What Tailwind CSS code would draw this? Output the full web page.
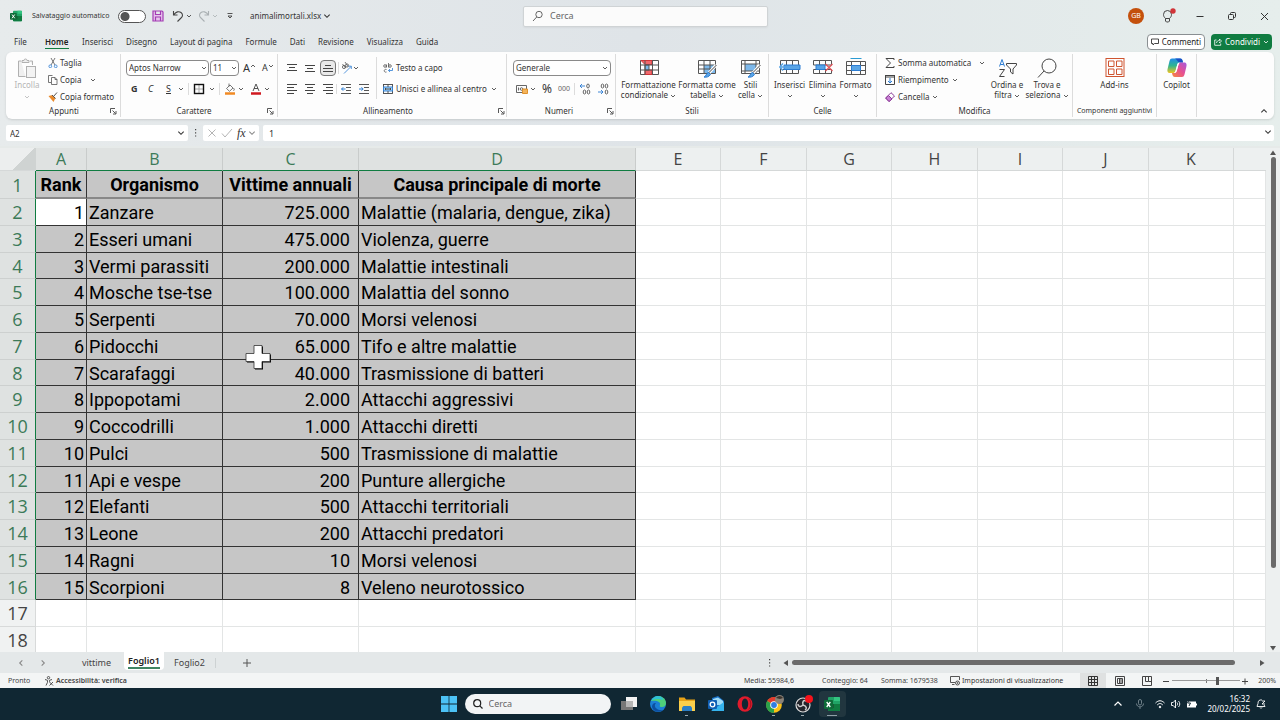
<!DOCTYPE html>
<html lang="it">
<head>
    <meta charset="UTF-8">
    <meta name="viewport" content="width=device-width, initial-scale=1.0">
    <title>animalimortali.xlsx - Excel</title>
    <script src="https://cdn.jsdelivr.net/npm/@tailwindcss/browser@4"></script>
</head>
<body class="flex flex-col h-screen overflow-hidden bg-[#e3e7e9] font-['Noto_Sans',sans-serif] text-[8px] leading-[10px] text-[#333] whitespace-nowrap">

    <svg class="hidden">
        <symbol id="chev" viewBox="0 0 6 6"><path d="M1 2l2 2 2-2" fill="none" stroke="currentColor" stroke-width=".8"/></symbol>
        <symbol id="launch" viewBox="0 0 7 7"><path d="M.5 5V.5H5M2.500 2.500l3 3M6 3v3H3" fill="none" stroke="#444" stroke-width=".9"/></symbol>
        <symbol id="excel" viewBox="0 0 16 16">
            <rect x="4" y="1" width="12" height="14" rx="1" fill="#21a366"/>
            <path d="M10 1h5a1 1 0 0 1 1 1v3h-6z" fill="#33c481"/>
            <path d="M4 8h12v6a1 1 0 0 1-1 1H5a1 1 0 0 1-1-1z" fill="#107c41"/>
            <path d="M4 8h6v4H4z" fill="#185c37"/>
            <rect x="0" y="4" width="9" height="9" rx="1" fill="#0e6b38"/>
            <path d="M2.700 6l3.600 5M6.300 6l-3.600 5" stroke="#fff" stroke-width="1.300"/>
        </symbol>
    </svg>

    <header class="shrink-0 bg-linear-to-r from-[#e7ebec] via-[#dfe4e8] to-[#e6eeec]">
        <!-- title bar -->
        <div class="flex items-center h-8">
            <div class="flex items-center w-[523px] pl-2.5">
                <svg class="size-3"><use href="#excel"/></svg>
                <label for="autosave" class="ml-2.5 w-[86px] text-[7px]">Salvataggio automatico</label>
                <input type="checkbox" id="autosave" class="appearance-none w-7 h-[13px] rounded-full border border-[#555] bg-white bg-[radial-gradient(circle_at_6px_50%,#555_4px,transparent_5px)]">
                <button aria-label="Salva" class="ml-1.5">
                    <svg class="size-3" viewBox="0 0 12 12" fill="none" stroke="#a33cb4" stroke-width="1.200"><path d="M1 1h9l1 1v9H1zM3.500 1v3.500h5V1M3.500 11V7h5v4" fill="#e6c3ec"/></svg>
                </button>
                <button aria-label="Annulla" class="ml-2">
                    <svg class="size-3" viewBox="0 0 12 12" fill="none" stroke="#444" stroke-width="1.100"><path d="M1.500 1v4h4M1.500 5C4 1.500 7 1 9 2.500s2 4 0 5.500L5.500 11.500"/></svg>
                </button>
                <svg class="size-1.5 ml-0.5"><use href="#chev"/></svg>
                <button aria-label="Ripeti" class="ml-1.5 text-[#aab0b3]">
                    <svg class="size-3" viewBox="0 0 12 12" fill="none" stroke="currentColor" stroke-width="1.100"><path d="M10.500 1v4h-4M10.500 5C8 1.500 5 1 3 2.500s-2 4 0 5.500l3.500 3.500"/></svg>
                </button>
                <svg class="size-1.5 ml-0.5 text-[#aab0b3]"><use href="#chev"/></svg>
                <button aria-label="Personalizza barra di accesso rapido" class="ml-2">
                    <svg class="size-2" viewBox="0 0 8 8" fill="none" stroke="#444" stroke-width=".9"><path d="M1.500 1.500h5M2 4l2 2 2-2z"/></svg>
                </button>
                <button class="flex items-center gap-0.5 ml-4">animalimortali.xlsx
                    <svg class="size-2"><use href="#chev"/></svg>
                </button>
            </div>
            <div class="flex items-center w-[245px] h-[21px] px-2 bg-[#fbfbfb] border border-[#cfd3d5] rounded-xs shadow-xs">
                <svg class="size-3" viewBox="0 0 12 12" fill="none" stroke="#555" stroke-width=".9"><circle cx="7" cy="4.500" r="3.200"/><path d="M4.700 7L1 11"/></svg>
                <input type="search" aria-label="Cerca" placeholder="Cerca" class="ml-1.5 flex-1 min-w-0 text-[9px] placeholder:text-[#666]">
            </div>
            <div class="flex flex-1 items-center justify-end pr-2.5">
                <span class="flex items-center justify-center size-4 rounded-full bg-[#c4500c] text-white text-[7px]">GB</span>
                <button aria-label="Suggerimenti" class="ml-4">
                    <svg class="size-4" viewBox="0 0 16 16" fill="none" stroke="#444"><path d="M5.500 10.500C4 9 3.500 8 3.500 6.500a4 4 0 0 1 8 0c0 1.500-.5 2.500-2 4zM5.500 10.500v2.500l1 1h2l1-1v-2.500"/><circle cx="13" cy="3" r="2.700" fill="#d13438" stroke="none"/></svg>
                </button>
                <button aria-label="Riduci a icona" class="ml-[18px]"><svg class="size-3" viewBox="0 0 12 12" stroke="#333"><path d="M2.500 6.500h7"/></svg></button>
                <button aria-label="Ripristina" class="ml-5"><svg class="size-3" viewBox="0 0 12 12" fill="none" stroke="#333"><rect x="2.500" y="4.500" width="5" height="5" rx="1"/><path d="M4.500 4V3.500a1 1 0 0 1 1-1h3a1 1 0 0 1 1 1v3a1 1 0 0 1-1 1H8"/></svg></button>
                <button aria-label="Chiudi" class="ml-5"><svg class="size-3" viewBox="0 0 12 12" stroke="#333"><path d="M3 3l7 7M10 3l-7 7"/></svg></button>
            </div>
        </div>

        <!-- ribbon tabs -->
        <nav class="flex items-center h-5 pl-3.5 pr-2">
            <div class="flex items-center gap-[13px]">
                <a href="#" class="w-[18px]">File</a>
                <a href="#" class="relative w-6 font-semibold text-[#222] after:absolute after:inset-x-0 after:-bottom-0.5 after:h-px after:bg-[#107c41]">Home</a>
                <a href="#">Inserisci</a>
                <a href="#">Disegno</a>
                <a href="#">Layout di pagina</a>
                <a href="#">Formule</a>
                <a href="#">Dati</a>
                <a href="#">Revisione</a>
                <a href="#">Visualizza</a>
                <a href="#">Guida</a>
            </div>
            <div class="flex gap-1.5 ml-auto">
                <button class="flex items-center gap-[3px] h-4 px-[3px] bg-white border border-[#8a8f92] rounded-sm text-[#222]">
                    <svg class="size-2" viewBox="0 0 8 8" fill="none" stroke="#333" stroke-width=".9"><path d="M.5 1h7v4.500h-4L2 7V5.500H.5z"/></svg>
                    Commenti
                </button>
                <button class="flex items-center gap-[3px] h-4 px-[3px] bg-[#107c41] rounded-sm text-white">
                    <svg class="size-2" viewBox="0 0 8 8" fill="none" stroke="#fff" stroke-width=".8"><path d="M2.500 2H.7v5.300h6V5.500M2.500 5c.3-2 1.500-2.500 3-2.500V1l2 2-2 2V3.800"/></svg>
                    Condividi
                    <svg class="size-1.5"><use href="#chev"/></svg>
                </button>
            </div>
        </nav>

        <!-- ribbon -->
        <div class="flex h-[67px] mx-1.5 bg-[#fdfdfd] rounded-md shadow-sm py-0.5">
            <section class="flex flex-col w-[115px] shrink-0 border-r border-[#dcdcdc]">
                <div class="flex h-[52px]">
                    <button class="flex flex-col items-center w-[42px] pt-1 text-[#b5b5b5]">
                        <svg class="size-[22px]" viewBox="0 0 22 22" fill="none" stroke="#b0b0b0"><path d="M5 3H2.500v15.500h7M14 3h2.500v4M6 4.500h7V2.500h-2a1.500 1.500 0 0 0-3 0H6z" fill="#efefef"/><rect x="10.500" y="8.500" width="9" height="11" fill="#f3f3f3"/></svg>
                        <span>Incolla</span>
                        <svg class="size-1.5 mt-1"><use href="#chev"/></svg>
                    </button>
                    <div class="flex flex-col">
                        <button class="flex items-center h-[17px] gap-0.5">
                            <svg class="size-2.5" viewBox="0 0 10 10" fill="none" stroke="#555" stroke-width=".8"><path d="M3 0l4 7M7 0L3 7"/><circle cx="2.300" cy="8.300" r="1.400" stroke="#2b7cd3"/><circle cx="7.700" cy="8.300" r="1.400" stroke="#2b7cd3"/></svg>
                            Taglia
                        </button>
                        <button class="flex items-center h-[17px] gap-0.5">
                            <svg class="size-2.5" viewBox="0 0 10 10" fill="none" stroke="#555" stroke-width=".8"><path d="M3 7.500H.5v-7h4"/><path d="M3.500 2.500h3.500l2 2v5h-5.500zM7 2.500v2h2"/></svg>
                            <span class="w-7 text-left">Copia</span>
                            <svg class="size-1.5"><use href="#chev"/></svg>
                        </button>
                        <button class="flex items-center h-[17px] gap-0.5">
                            <svg class="size-2.5" viewBox="0 0 10 10"><path d="M.5 4l4-1 3 3-2 4z" fill="#e8892b"/><path d="M4 3l3.500 3.500M5.500 4.500l3.500-4" stroke="#555" fill="none"/></svg>
                            Copia formato
                        </button>
                    </div>
                </div>
                <div class="flex items-center h-3"><span class="flex-1 text-center pl-3">Appunti</span><button aria-label="Appunti: opzioni" class="mr-[3px]"><svg class="size-[7px]"><use href="#launch"/></svg></button></div>
            </section>

            <section class="flex flex-col w-[157px] shrink-0 border-r border-[#dcdcdc]">
                <div class="flex flex-col h-[52px] pl-[5px] pt-[3px]">
                    <div class="flex items-center h-[21px]">
                        <div class="relative">
                            <select aria-label="Tipo di carattere" class="appearance-none w-[83px] h-4 pl-0.5 border border-[#8a8a8a] rounded-sm bg-white"><option>Aptos Narrow</option></select>
                            <svg class="absolute right-0.5 top-[5px] size-1.5"><use href="#chev"/></svg>
                        </div>
                        <div class="relative ml-px">
                            <select aria-label="Dimensione carattere" class="appearance-none w-[29px] h-4 pl-0.5 border border-[#8a8a8a] rounded-sm bg-white"><option>11</option></select>
                            <svg class="absolute right-0.5 top-[5px] size-1.5"><use href="#chev"/></svg>
                        </div>
                        <button aria-label="Aumenta dimensione carattere" class="flex ml-1 text-[11px]">A<svg class="size-1.5 rotate-180"><use href="#chev"/></svg></button>
                        <button aria-label="Riduci dimensione carattere" class="flex ml-1.5 text-[9px]">A<svg class="size-1.5"><use href="#chev"/></svg></button>
                    </div>
                    <div class="flex items-center h-[21px] pl-[5px] text-[9px]">
                        <button class="font-bold w-[17px] text-left">G</button>
                        <button class="italic w-[18px] text-left">C</button>
                        <button class="underline w-[12px] text-left">S</button>
                        <svg class="size-1.5"><use href="#chev"/></svg>
                        <button aria-label="Bordi" class="ml-1 pl-1 border-l border-[#dcdcdc]"><svg class="size-3" viewBox="0 0 12 12" fill="none"><path d="M6 2v8M2 6h8" stroke="#aaa"/><rect x="1.500" y="1.500" width="9" height="9" stroke="#111" stroke-width="1.400"/></svg></button>
                        <svg class="size-1.5 ml-1"><use href="#chev"/></svg>
                        <button aria-label="Colore riempimento" class="ml-1 pl-1 border-l border-[#dcdcdc]"><svg class="size-3" viewBox="0 0 12 12" fill="none" stroke="#555" stroke-width=".8"><path d="M2.500 5.500L6 2l3 3-3.500 3.300zM5 .5v3M9.500 5c1 1.500 1 2.500 0 2.500"/><path d="M1 10.500h10" stroke="#f08a24" stroke-width="2.500"/></svg></button>
                        <svg class="size-1.5 ml-0.5"><use href="#chev"/></svg>
                        <button aria-label="Colore carattere" class="ml-1.5"><svg class="size-3" viewBox="0 0 12 12" fill="none" stroke="#444" stroke-width=".9"><path d="M3 8l3-7 3 7M4 5.500h4"/><path d="M1 10.500h10" stroke="#d0191f" stroke-width="2.500"/></svg></button>
                        <svg class="size-1.5 ml-0.5"><use href="#chev"/></svg>
                    </div>
                </div>
                <div class="flex items-center h-3"><span class="flex-1 text-center">Carattere</span><button aria-label="Carattere: opzioni" class="mr-[3px]"><svg class="size-[7px]"><use href="#launch"/></svg></button></div>
            </section>

            <section class="flex flex-col w-[229px] shrink-0 border-r border-[#dcdcdc]">
                <div class="flex h-[52px] pl-1.5 pt-[3px]">
                    <div class="w-[92px]">
                        <div class="flex items-center h-[21px]">
                            <button aria-label="Allinea in alto" class="p-[3px]"><svg class="size-2.5" viewBox="0 0 10 10" stroke="#444"><path d="M0 1.500h10M2 4.500h6M0 7.500h10"/></svg></button>
                            <button aria-label="Allinea al centro verticalmente" class="p-[3px] ml-0.5"><svg class="size-2.5" viewBox="0 0 10 10" stroke="#444"><path d="M0 2.500h10M2 5.500h6M0 8.500h10"/></svg></button>
                            <button aria-label="Allinea in basso" class="p-0.5 ml-0.5 border border-[#777] rounded-sm bg-[#e8e8e8]"><svg class="size-2.5" viewBox="0 0 10 10" stroke="#444"><path d="M2 2.500h6M0 5.500h10M0 8.500h10"/></svg></button>
                            <button aria-label="Orientamento" class="ml-0.5 pl-0.5 border-l border-[#dcdcdc]"><svg class="size-3" viewBox="0 0 12 12" fill="none" stroke="#555" stroke-width=".8"><circle cx="3" cy="5" r="1.600"/><circle cx="6" cy="3.500" r="1.600"/><path d="M1.500 2l3 4M4 0l3 4.500"/><path d="M3 11.500l7-7M7.500 4.200h2.800V7" stroke="#2b7cd3"/></svg></button>
                            <svg class="size-1.5"><use href="#chev"/></svg>
                        </div>
                        <div class="flex items-center h-[21px]">
                            <button aria-label="Allinea a sinistra" class="p-[3px]"><svg class="size-2.5" viewBox="0 0 10 10" stroke="#444"><path d="M0 .5h10M0 3.500h7M0 6.500h10M0 9.500h7"/></svg></button>
                            <button aria-label="Allinea al centro" class="p-[3px] ml-0.5"><svg class="size-2.5" viewBox="0 0 10 10" stroke="#444"><path d="M0 .5h10M2 3.500h6M0 6.500h10M2 9.500h6"/></svg></button>
                            <button aria-label="Allinea a destra" class="p-[3px] ml-0.5"><svg class="size-2.5" viewBox="0 0 10 10" stroke="#444"><path d="M0 .5h10M3 3.500h7M0 6.500h10M3 9.500h7"/></svg></button>
                            <button aria-label="Riduci rientro" class="pl-1 border-l border-[#dcdcdc]"><svg class="size-2.5" viewBox="0 0 10 10" fill="none" stroke="#555"><path d="M0 .5h10M5 3.500h5M5 6.500h5M0 9.500h10"/><path d="M4.500 5H.7M2.200 3.300L.5 5l1.700 1.700" stroke="#2b7cd3"/></svg></button>
                            <button aria-label="Aumenta rientro" class="ml-2"><svg class="size-2.5" viewBox="0 0 10 10" fill="none" stroke="#555"><path d="M0 .5h10M5 3.500h5M5 6.500h5M0 9.500h10"/><path d="M0 5h4M2.500 3.300L4.200 5 2.500 6.700" stroke="#2b7cd3"/></svg></button>
                        </div>
                    </div>
                    <div class="pl-1.5 border-l border-[#dcdcdc] h-[42px]">
                        <button class="flex items-center h-[21px] gap-[3px]">
                            <svg class="size-2.5" viewBox="0 0 10 10" fill="none" stroke="#555" stroke-width=".8"><circle cx="2" cy="3" r="1.300"/><path d="M3.500 1.500v3M5.500 0v4.500"/><circle cx="7" cy="3" r="1.300"/><path d="M3.500 6.500c-3-1-3 3.500 0 2.500"/><path d="M9.500 5v2.500H5.500M7 6L5.500 7.500 7 9" stroke="#2b7cd3"/></svg>
                            Testo a capo
                        </button>
                        <button class="flex items-center h-[21px] gap-[3px]">
                            <svg class="size-2.5" viewBox="0 0 10 10" fill="none" stroke="#444" stroke-width=".9"><rect x=".5" y=".5" width="9" height="9"/><rect x=".5" y="3" width="9" height="4" fill="#a9d3f5" stroke="#2b7cd3"/><path d="M5 .5V3M5 7v2.500M2 5h6M3 4L2 5l1 1M7 4l1 1-1 1"/></svg>
                            <span class="w-[92px] text-left">Unisci e allinea al centro</span>
                            <svg class="size-1.5"><use href="#chev"/></svg>
                        </button>
                    </div>
                </div>
                <div class="flex items-center h-3"><span class="flex-1 text-center">Allineamento</span><button aria-label="Allineamento: opzioni" class="mr-px"><svg class="size-[7px]"><use href="#launch"/></svg></button></div>
            </section>

            <section class="flex flex-col w-[109px] shrink-0 border-r border-[#dcdcdc]">
                <div class="h-[52px] pl-1.5 pt-[3px]">
                    <div class="relative flex items-center h-[21px]">
                        <select aria-label="Formato numero" class="appearance-none w-[98px] h-4 pl-0.5 border border-[#8a8a8a] rounded-sm bg-white"><option>Generale</option></select>
                        <svg class="absolute right-[7px] top-2 size-1.5"><use href="#chev"/></svg>
                    </div>
                    <div class="flex items-center h-[21px] pl-[3px]">
                        <button aria-label="Formato valuta"><svg class="size-3" viewBox="0 0 12 12" fill="none" stroke="#555" stroke-width=".9"><path d="M.5 2.500h10v7H.5zM2.500 4.500v3"/><circle cx="5.500" cy="6" r="1.300"/><path d="M6.500 6h5v4.500h-5z" fill="#f3b45c" stroke="#dd8a1f"/></svg></button>
                        <svg class="size-1.5 ml-0.5"><use href="#chev"/></svg>
                        <button class="ml-1.5 text-[12px]">%</button>
                        <button aria-label="Stile separatore" class="ml-1.5 text-[#666] text-[7px]">000</button>
                        <button aria-label="Aumenta decimali" class="ml-1 pl-1 border-l border-[#dcdcdc]"><svg class="size-3" viewBox="0 0 12 12" fill="none" stroke="#555" stroke-width=".9"><ellipse cx="9" cy="3" rx="1.300" ry="2"/><ellipse cx="5.500" cy="9" rx="1.300" ry="2"/><ellipse cx="9.500" cy="9" rx="1.300" ry="2"/><path d="M6 3H1M3 1L1 3l2 2" stroke="#2b7cd3"/></svg></button>
                        <button aria-label="Diminuisci decimali" class="ml-1.5"><svg class="size-3" viewBox="0 0 12 12" fill="none" stroke="#555" stroke-width=".9"><ellipse cx="5.500" cy="3" rx="1.300" ry="2"/><ellipse cx="9.500" cy="3" rx="1.300" ry="2"/><ellipse cx="9.500" cy="9" rx="1.300" ry="2"/><path d="M1 9h5M4 7l2 2-2 2" stroke="#2b7cd3"/></svg></button>
                    </div>
                </div>
                <div class="flex items-center h-3"><span class="flex-1 text-center pl-1">Numeri</span><button aria-label="Numeri: opzioni" class="mr-px"><svg class="size-[7px]"><use href="#launch"/></svg></button></div>
            </section>

            <section class="flex flex-col w-[153px] shrink-0 border-r border-[#dcdcdc] text-center">
                <div class="flex h-[52px] justify-center gap-1 pt-1">
                    <button class="flex flex-col items-center gap-0.5 w-[54px]">
                        <svg class="size-5" viewBox="0 0 20 20" fill="none" stroke="#555"><path d="M1.500 2.500h18v14h-18z" fill="#fff"/><path d="M2 2.500h11v4H6zM6 12h7v4.500H6z" fill="#f0686c" stroke="#d13438"/><path d="M6 7h4v5H6z" fill="#7db8ea"/><path d="M1.500 7h18M1.500 12h18M6 2.500v14M13.500 2.500v14"/></svg>
                        <span>Formattazione<br>condizionale <svg class="inline size-1.5"><use href="#chev"/></svg></span>
                    </button>
                    <button class="flex flex-col items-center gap-0.5 w-[55px]">
                        <svg class="size-5" viewBox="0 0 20 20" fill="none" stroke="#555"><path d="M1.500 2.500h17v13h-17z" fill="#fff"/><path d="M7 7h11v8H7z" fill="#7db8ea" stroke="none"/><path d="M1.500 7h17M1.500 11h17M7 2.500v13M13 2.500v13"/><path d="M19 7l-7 8" stroke="#fff" stroke-width="3"/><path d="M19.500 7l-8 8" stroke="#444"/><path d="M7 19c2 0 2-4 4.500-4.500l2 2C12 19 9 19.500 7 19z" fill="#5aa5e6" stroke="#2b7cd3"/></svg>
                        <span>Formatta come<br>tabella <svg class="inline size-1.5"><use href="#chev"/></svg></span>
                    </button>
                    <button class="flex flex-col items-center gap-0.5 w-[24px]">
                        <svg class="size-5" viewBox="0 0 20 20" fill="none" stroke="#555"><path d="M.5 2.500h18v13H.5z" fill="#fff"/><path d="M4 6h11v7H4z" fill="#7db8ea" stroke="none"/><path d="M.5 6h18M4 2.500v13M15 2.500v13M.5 13h18"/><path d="M19 7l-7 8" stroke="#fff" stroke-width="3"/><path d="M19.500 7l-8 8" stroke="#444"/><path d="M7 19c2 0 2-4 4.500-4.500l2 2C12 19 9 19.500 7 19z" fill="#5aa5e6" stroke="#2b7cd3"/></svg>
                        <span>Stili<br>cella <svg class="inline size-1.5"><use href="#chev"/></svg></span>
                    </button>
                </div>
                <span class="leading-3">Stili</span>
            </section>

            <section class="flex flex-col w-[108px] shrink-0 border-r border-[#dcdcdc] text-center">
                <div class="flex h-[52px] justify-center gap-0.5 pt-1">
                    <button class="flex flex-col items-center gap-0.5 w-[31px]">
                        <svg class="w-[22px] h-5" viewBox="0 0 22 20" fill="none" stroke="#555"><path d="M1.500 2.500h18v13h-18zM7.500 2.500v13M13.500 2.500v13M1.500 11.500h18"/><path d="M5 7h16v4.500H5z" fill="#5aa5e6" stroke="#2b7cd3"/><path d="M9 9H.8M4 5.500L.8 9 4 12.500" stroke="#5aa5e6" stroke-width="1.500"/></svg>
                        <span>Inserisci<br><svg class="inline size-1.5"><use href="#chev"/></svg></span>
                    </button>
                    <button class="flex flex-col items-center gap-0.5 w-[31px]">
                        <svg class="w-[22px] h-5" viewBox="0 0 22 20" fill="none" stroke="#555"><path d="M1.500 2.500h18v4.500M1.500 2.500V7h18M1.500 11.500v4h18v-4h-18M7.500 2.500V7M13.500 2.500V7M7.500 11.500v4M13.500 11.500v4"/><path d="M4 7h9v4.500H4z" fill="#5aa5e6" stroke="#2b7cd3"/><path d="M13.500 6l7 7M20.500 6l-7 7" stroke="#e0555a" stroke-width="1.300"/></svg>
                        <span>Elimina<br><svg class="inline size-1.5"><use href="#chev"/></svg></span>
                    </button>
                    <button class="flex flex-col items-center gap-0.5 w-[31px]">
                        <svg class="w-[22px] h-5" viewBox="0 0 22 20" fill="none" stroke="#555"><path d="M1.500 3.500h19v13h-19zM6.500 3.500v13M15.500 3.500v13M1.500 7.500h19M1.500 12.500h19"/><path d="M6.500 7.500h9v5h-9z" fill="#5aa5e6" stroke="#2b7cd3"/><path d="M5.500.5h11" stroke="#2b9bd3"/></svg>
                        <span>Formato<br><svg class="inline size-1.5"><use href="#chev"/></svg></span>
                    </button>
                </div>
                <span class="leading-3">Celle</span>
            </section>

            <section class="flex flex-col w-[196px] shrink-0 border-r border-[#dcdcdc] text-center">
                <div class="flex h-[52px] pl-2">
                    <div class="w-[102px]">
                        <button class="flex items-center h-[17px] gap-[3px]">
                            <svg class="size-2.5" viewBox="0 0 10 10" fill="none" stroke="#444"><path d="M9 2V.5H1L5.500 5 1 9.500h8V8"/></svg>
                            <span class="w-[78px] text-left">Somma automatica</span>
                            <svg class="size-1.5"><use href="#chev"/></svg>
                        </button>
                        <button class="flex items-center h-[17px] gap-[3px]">
                            <svg class="size-2.5" viewBox="0 0 10 10" fill="none" stroke="#444"><path d="M0 .5h10M.5.5v9h9v-9M.5 2h9"/><path d="M5 3v5M3 6l2 2 2-2" stroke="#2b7cd3"/></svg>
                            Riempimento
                            <svg class="size-1.5"><use href="#chev"/></svg>
                        </button>
                        <button class="flex items-center h-[17px] gap-[3px]">
                            <svg class="size-2.5" viewBox="0 0 10 10" fill="none" stroke="#8a3b96"><path d="M6 .7L9.500 4 4 9.500.7 6z"/><path d="M3.500 3.500L7 7 4 9.500.7 6z" fill="#c87fd4"/></svg>
                            Cancella
                            <svg class="size-1.5"><use href="#chev"/></svg>
                        </button>
                    </div>
                    <button class="flex flex-col items-center gap-0.5 w-10 pt-1">
                        <svg class="size-5" viewBox="0 0 20 20" fill="none"><path d="M2.500 8.500L5 1.500l2.500 7M3.300 6.500h3.400" stroke="#2b7cd3"/><path d="M2.500 11.500h5l-5 7h5" stroke="#444"/><path d="M9.500 5.500h10v1.500l-3.500 4v5l-2.500-2v-3l-4-4z" stroke="#444"/></svg>
                        <span>Ordina e<br>filtra <svg class="inline size-1.5"><use href="#chev"/></svg></span>
                    </button>
                    <button class="flex flex-col items-center gap-0.5 w-10 pt-1">
                        <svg class="size-5" viewBox="0 0 20 20" fill="none" stroke="#444"><circle cx="12" cy="8" r="7"/><path d="M7 13l-6 6.500"/></svg>
                        <span>Trova e<br>seleziona <svg class="inline size-1.5"><use href="#chev"/></svg></span>
                    </button>
                </div>
                <span class="leading-3">Modifica</span>
            </section>

            <section class="flex flex-col items-center w-[84px] shrink-0 border-r border-[#dcdcdc]">
                <button class="flex flex-col items-center gap-0.5 h-[52px] pt-1">
                    <svg class="size-5" viewBox="0 0 20 20" fill="none" stroke="#cf5430"><rect x="1" y=".5" width="18" height="18"/><path d="M3.500 3h5.500v5.500H3.500zM11.500 3H17v5.500h-5.500zM3.500 11H9v5.500H3.500zM11.500 11H17v5.500h-5.500z"/></svg>
                    Add-ins
                </button>
                <span class="leading-3 text-[7px]">Componenti aggiuntivi</span>
            </section>

            <section class="w-10 shrink-0 border-r border-[#dcdcdc] text-center">
                <button class="flex flex-col items-center gap-0.5 w-full h-[52px] pt-1">
                    <svg class="size-5" viewBox="0 0 20 20">
                        <defs>
                            <linearGradient id="cp1" x1="0" y1="0" x2="0" y2="1"><stop offset="0" stop-color="#1f8ce8"/><stop offset=".5" stop-color="#2fb58f"/><stop offset="1" stop-color="#f0c420"/></linearGradient>
                            <linearGradient id="cp2" x1="1" y1="0" x2="0" y2="1"><stop offset="0" stop-color="#a45be0"/><stop offset=".5" stop-color="#e8508f"/><stop offset="1" stop-color="#f58a3c"/></linearGradient>
                        </defs>
                        <path d="M5 .5h8c2 0 2.500 1.500 3 4h-3c-2 0-2.500 1-3 3L8.500 13c-.5 1.500-1.500 2-3 2H3C.5 15 0 13 .7 10.500L2.500 3C3 1.300 3.700.5 5 .5z" fill="url(#cp1)"/>
                        <path d="M8 .5h5c2 0 2.500 1.500 3 4h-3.500C11 4.500 10.500 2 8 .5z" fill="#1b4fc4"/>
                        <path d="M15 19H8c-2 0-2.500-1.500-3-4h2c2 0 2.500-1 3-3l1.500-5.500c.5-1.500 1.500-2 3-2H17c2.500 0 3 2 2.300 4.500L17.500 16.500c-.5 1.700-1.200 2.500-2.500 2.500z" fill="url(#cp2)"/>
                        <path d="M10 7.500L8.500 13c-.3 1-.8 1.600-1.500 2 2 0 2.500-1 3-3l1.500-5.500c.3-1 .8-1.700 1.500-2-2 0-2.500 1-3 3z" fill="#fff"/>
                    </svg>
                    Copilot
                </button>
            </section>
            <div class="flex flex-1 items-end justify-end pr-1.5 pb-0.5">
                <button aria-label="Comprimi barra multifunzione"><svg class="size-2 rotate-180"><use href="#chev"/></svg></button>
            </div>
        </div>

        <!-- formula bar -->
        <div class="flex items-center h-[27px] pb-[5px] pt-1.5 pl-1.5 pr-1.5">
            <div class="relative w-[182px]">
                <input type="text" aria-label="Casella nome" value="A2" class="w-full h-4 px-1 bg-white rounded-xs">
                <svg class="absolute right-[3px] top-1 size-2"><use href="#chev"/></svg>
            </div>
            <svg class="w-[15px] h-2" viewBox="0 0 15 8" fill="#444"><path d="M7 0h1.200v1.200H7zM7 3.200h1.200v1.200H7zM7 6.400h1.200v1.200H7z"/></svg>
            <div class="flex items-center gap-1 h-4 w-14 px-1 bg-white rounded-xs">
                <button aria-label="Annulla immissione"><svg class="size-2.5" viewBox="0 0 10 10" stroke="#b5b5b5"><path d="M1.500 1.500l7 7M8.500 1.500l-7 7"/></svg></button>
                <button aria-label="Invio"><svg class="size-3" viewBox="0 0 12 12" fill="none" stroke="#b5b5b5"><path d="M1 6.500l3 3.500 7-8"/></svg></button>
                <button class="font-['Liberation_Serif',serif] italic text-[12px]">fx</button>
                <svg class="size-2 -ml-0.5 shrink-0 text-[#888]"><use href="#chev"/></svg>
            </div>
            <div class="relative flex-1 ml-1">
                <input type="text" aria-label="Barra della formula" value="1" class="w-full h-4 px-1.5 bg-white rounded-xs text-[9px]">
                <svg class="absolute right-0.5 top-[3px] size-2"><use href="#chev"/></svg>
            </div>
        </div>
    </header>

    <!-- sheet -->
    <main class="relative flex flex-1 min-h-0 bg-white border-t-2 border-[#e6eae9]">
        <div class="flex-1 min-w-0 overflow-hidden">
            <table class="w-full table-fixed border-separate border-spacing-0 font-[Roboto,sans-serif] text-[18px] leading-6 text-black">
                <colgroup>
                    <col class="w-9"><col class="w-[51px]"><col class="w-[136px]"><col class="w-[136px]"><col class="w-[277px]">
                    <col class="w-[85px]"><col class="w-[86px]"><col class="w-[85px]"><col class="w-[86px]"><col class="w-[85px]"><col class="w-[86px]"><col class="w-[85px]"><col>
                </colgroup>
                <thead id="cols"></thead>
                <tbody id="rows"></tbody>
            </table>
        </div>
        <!-- cell pointer -->
        <svg class="absolute left-[244px] top-[195px] size-7" viewBox="0 0 28 28"><path d="M11 3.500h8v8h8v8h-8v7h-8v-7H3v-8h8z" fill="#000"/><path d="M10 2.500h8v8h8v8h-8v7h-8v-7H2v-8h8z" fill="#fff" stroke="#333" stroke-width=".8"/></svg>
        <div class="flex flex-col items-center w-3.5 bg-[#edf0f0]">
            <svg class="size-2 mt-px" viewBox="0 0 8 8" fill="#555"><path d="M4 1.500L7 6H1z"/></svg>
            <div class="w-[5px] h-[411px] rounded-full bg-[#6b6b6b]"></div>
            <svg class="size-2 mt-auto" viewBox="0 0 8 8" fill="#555"><path d="M4 6.500L7 2H1z"/></svg>
        </div>
    </main>

    <!-- sheet tabs -->
    <div class="flex items-center h-[21px] shrink-0 bg-[#e4e8e9] text-[#444]">
        <button aria-label="Foglio precedente" class="ml-[17px]"><svg class="size-2 rotate-90 text-[#888]"><use href="#chev"/></svg></button>
        <button aria-label="Foglio successivo" class="ml-3.5"><svg class="size-2 -rotate-90 text-[#888]"><use href="#chev"/></svg></button>
        <button class="w-[75px] pl-5 ml-0.5 text-[9px]">vittime</button>
        <button class="self-start w-10 h-[18px] bg-white rounded-b-sm font-semibold text-[9px] text-[#222]"><span class="border-b-2 border-[#3f8562]">Foglio1</span></button>
        <button class="w-[52px] border-r border-[#cdd2d3] text-[9px]">Foglio2</button>
        <button aria-label="Nuovo foglio" class="ml-[26px]"><svg class="size-2.5" viewBox="0 0 10 10" stroke="#555"><path d="M5 1v8M1 5h8"/></svg></button>
        <div class="flex items-center ml-auto w-[514px]">
            <svg class="w-2 h-2" viewBox="0 0 8 8" fill="#444"><path d="M3 0h1.200v1.200H3zM3 3.200h1.200v1.200H3zM3 6.400h1.200v1.200H3z"/></svg>
            <svg class="size-2 ml-2" viewBox="0 0 8 8" fill="#555"><path d="M1.500 4L6 1v6z"/></svg>
            <div class="w-[443px] h-[5px] ml-0.5 rounded-full bg-[#6b6b6b]"></div>
            <svg class="size-2 ml-[23px]" viewBox="0 0 8 8" fill="#555"><path d="M6.500 4L2 1v6z"/></svg>
        </div>
    </div>

    <!-- status bar -->
    <footer class="flex items-center h-[15px] shrink-0 pl-2 pr-1 bg-[#f3f5f5] text-[7px] text-[#444]">
        <span class="w-9">Pronto</span>
        <svg class="size-2.5" viewBox="0 0 10 10" fill="none" stroke="#444" stroke-width=".9"><circle cx="4.500" cy="1.700" r="1.200"/><path d="M1 3.500l2.500.8v2L2 9.500M8 3.500l-2.500.8v1.500"/><path d="M5.500 6l3.500 3.500M9 6L5.500 9.500"/></svg>
        <span class="ml-0.5 font-semibold">Accessibilità: verifica</span>
        <div class="flex items-center ml-auto">
            <span class="w-[78px]">Media: 55984,6</span>
            <span class="w-[59px]">Conteggio: 64</span>
            <span class="w-[69px]">Somma: 1679538</span>
            <button class="flex items-center gap-0.5 w-[130px] text-[#333]">
                <svg class="size-2.5" viewBox="0 0 10 10" fill="none" stroke="#444" stroke-width=".9"><path d="M5 6.500H.5v-6h9V4M2 8.500h2.500"/><circle cx="7.500" cy="7" r="2"/><circle cx="7.500" cy="7" r=".5"/></svg>
                Impostazioni di visualizzazione
            </button>
            <button aria-label="Normale" class="flex items-center justify-center w-[26px] h-[15px] bg-[#dfe1e1]"><svg class="size-2.5" viewBox="0 0 10 10" fill="none" stroke="#333"><path d="M.5.5h9v9h-9zM3.500.5v9M6.500.5v9M.5 3.500h9M.5 6.500h9"/></svg></button>
            <button aria-label="Layout di pagina" class="ml-[9px]"><svg class="size-2.5" viewBox="0 0 10 10" fill="none" stroke="#444"><path d="M.5.5h9v9h-9zM2.500 2.500h5v5h-5zM4.500 2.500v5M6 2.500v5"/></svg></button>
            <button aria-label="Anteprima interruzioni di pagina" class="ml-[17px]"><svg class="size-2.5" viewBox="0 0 10 10" fill="none" stroke="#444"><path d="M.5.5h9v9h-9zM3.500.5v5h3v-5M6.500 5.500h3"/></svg></button>
            <button aria-label="Zoom indietro" class="ml-2.5"><svg class="size-2" viewBox="0 0 8 8" stroke="#444"><path d="M1 4.500h6"/></svg></button>
            <input type="range" aria-label="Zoom" min="0" max="100" value="67" class="appearance-none w-[68px] h-2.5 ml-0.5 bg-[linear-gradient(#999,#999),linear-gradient(#777,#777)] bg-[length:100%_1px,1px_4px] bg-center bg-no-repeat [&::-webkit-slider-thumb]:appearance-none [&::-webkit-slider-thumb]:w-[3px] [&::-webkit-slider-thumb]:h-2 [&::-webkit-slider-thumb]:bg-[#555]">
            <button aria-label="Zoom avanti" class="ml-px"><svg class="size-2" viewBox="0 0 8 8" stroke="#444"><path d="M1 4.500h6M4 1.500v6"/></svg></button>
            <button class="ml-2 w-[19px] text-right">200%</button>
        </div>
    </footer>

    <!-- windows taskbar -->
    <div class="grid grid-cols-[1fr_auto_1fr] items-center h-8 shrink-0 bg-[#102733]">
        <div></div>
        <div class="flex items-center pl-1.5">
            <button aria-label="Start"><svg class="size-4" viewBox="0 0 16 16" fill="#4cc2f5"><path d="M0 0h7.600v7.600H0zM8.400 0H16v7.600H8.400zM0 8.400h7.600V16H0zM8.400 8.400H16V16H8.400z"/></svg></button>
            <div class="flex items-center w-[146px] h-5 ml-2 px-2 rounded-full bg-[#f2f4f5]">
                <svg class="size-2.5" viewBox="0 0 10 10" fill="none" stroke="#222" stroke-width="1.200"><circle cx="4.200" cy="4.200" r="3.500"/><path d="M6.800 6.800L9.500 9.500"/></svg>
                <input type="search" aria-label="Cerca in Windows" placeholder="Cerca" class="ml-1.5 w-24 text-[9px] placeholder:text-[#666]">
            </div>
            <button aria-label="Visualizzazione attività" class="ml-2.5"><svg class="size-4" viewBox="0 0 16 16"><path d="M5 1h11v10H5z" fill="#f2f2f2"/><path d="M0 5h12v9H0z" fill="#777"/><path d="M5 5h7v6H5z" fill="#b5b5b5"/></svg></button>
            <button aria-label="Edge" class="ml-[13px]"><svg class="size-4" viewBox="0 0 16 16"><circle cx="8" cy="8" r="8" fill="#1b7fd6"/><path d="M1 5C3 1 7 0 9 0c4.500.500 7 4 7 7 0 3-2 4.500-5 4-1.500-.3-1.500-1-1-2C11 6 7 4 1 5z" fill="#4fd07a"/><path d="M1 5C3 1 6 .2 8 0c3 .2 5 2 5 4-3-1-8-2-12 1z" fill="#2fc0d5"/><path d="M6 7c-3 3 0 8 7 7-4 3-10 2-11-3 0-3 2-4.500 4-4z" fill="#0d4fa0"/></svg></button>
            <button aria-label="Esplora file" class="relative ml-[13px]"><svg class="size-4" viewBox="0 0 16 16"><path d="M0 1.500h5.500L7 3.500h9V15H0z" fill="#e8a317"/><path d="M0 5h16v10H0z" fill="#fbcf4b"/><path d="M3 15v-3.500l1.500-1.500h7l1.500 1.500V15z" fill="#2b7fc6"/></svg><span class="absolute left-1.5 -bottom-1 w-[3px] h-px bg-[#9aa8b0]"></span></button>
            <button aria-label="Outlook" class="ml-[13px]"><svg class="size-4" viewBox="0 0 16 16"><path d="M4 2l6-2 6 5v10H4z" fill="#1a73c8"/><path d="M5 3l5-1.500L15 5v4H5z" fill="#9fdcf8"/><path d="M3 15l13-9v9z" fill="#35b4ee"/><rect y="4" width="9" height="9" rx="1" fill="#0f5fb5"/><circle cx="4.500" cy="8.500" r="2.300" fill="none" stroke="#fff" stroke-width="1.300"/></svg></button>
            <button aria-label="Opera" class="ml-[13px]"><svg class="size-4" viewBox="0 0 16 16"><ellipse cx="8" cy="8" rx="7.500" ry="7.800" fill="#e01b2c"/><ellipse cx="8" cy="8" rx="3.200" ry="5.600" fill="#102733"/><path d="M11 2c4 2 5 9 0 12 3-3 3-9 0-12z" fill="#a5101e"/></svg></button>
            <button aria-label="Chrome" class="relative ml-[13px]"><svg class="size-[18px]" viewBox="0 0 18 18"><circle cx="8" cy="10" r="7.800" fill="#fbc116"/><path d="M8 10L1.200 6A7.800 7.800 0 0 1 14.800 6z" fill="#e33b2e"/><path d="M8 10l0 7.800A7.800 7.800 0 0 1 1.200 6z" fill="#2ba24c"/><circle cx="8" cy="10" r="3.800" fill="#fff"/><circle cx="8" cy="10" r="2.900" fill="#2f7de1"/><circle cx="13.500" cy="4.500" r="4.500" fill="#8b8378"/><path d="M10 3a4 4 0 0 1 7 0l-3 1z" fill="#3c352e"/></svg><span class="absolute left-1.5 -bottom-[3px] w-[3px] h-px bg-[#9aa8b0]"></span></button>
            <button aria-label="OBS" class="relative ml-[11px]"><svg class="size-[18px]" viewBox="0 0 18 18" fill="none"><circle cx="8" cy="10" r="7" fill="#23252b" stroke="#ddd" stroke-width="1.200"/><path d="M8 10c-1-4 1-5 3-4M8 10c4 1 4 4 2 5M8 10c-3 3-5 1-5-1" stroke="#ccc" stroke-width="1.500"/><circle cx="14" cy="4" r="4" fill="#f5131b"/></svg><span class="absolute left-1.5 -bottom-[3px] w-[3px] h-px bg-[#9aa8b0]"></span></button>
            <button aria-label="Excel" class="relative flex items-center justify-center w-[27px] h-[26px] ml-1.5 rounded-sm bg-[#21363f]"><svg class="size-4"><use href="#excel"/></svg><span class="absolute left-2 bottom-px w-[10px] h-px bg-[#8fa0a8]"></span></button>
        </div>
        <div class="flex items-center justify-end pr-3.5 text-white">
            <button aria-label="Mostra icone nascoste"><svg class="size-2.5" viewBox="0 0 10 10" fill="none" stroke="#fff" stroke-width="1.200"><path d="M1.500 6.500L5 3l3.500 3.500"/></svg></button>
            <svg class="size-2.5 ml-3" viewBox="0 0 10 10" fill="none" stroke="#6f8089"><rect x="3.500" y=".5" width="3" height="5.500" rx="1.500"/><path d="M1.500 4.500c0 4.500 7 4.500 7 0M5 8v2"/></svg>
            <button aria-label="Rete, volume, batteria" class="flex items-center gap-1.5 ml-2.5">
                <svg class="size-2.5" viewBox="0 0 10 10" fill="none" stroke="#fff"><path d="M.5 4c3-3 6-3 9 0M2.200 6c2-2 3.600-2 5.600 0"/><circle cx="5" cy="8" r=".8" fill="#fff"/></svg>
                <svg class="size-2.5" viewBox="0 0 10 10" fill="none" stroke="#fff" stroke-width=".9"><path d="M.5 3.500h1.700L4.500 1v8L2.200 6.500H.5zM6 3.500c.8 1 .8 2 0 3M7.500 2c1.700 2 1.700 4 0 6"/></svg>
                <svg class="size-2.5" viewBox="0 0 10 10"><path d="M0 2.500h9v6H0zM9 4.500h1v2H9z" fill="#fff"/><path d="M2.500 0L.5 4h3L2 7" stroke="#102733" fill="none"/></svg>
            </button>
            <div class="w-[46px] ml-[7px] text-right"><div>16:32</div><div>20/02/2025</div></div>
            <button aria-label="Notifiche" class="ml-1.5"><svg class="size-2.5" viewBox="0 0 10 10" fill="none" stroke="#fff" stroke-width=".9"><path d="M6 1C3 .5 2 2 2 4.500L1 7.500h8L8 6M4 8.500c.5 1 1.500 1 2 0M6 2h3L6 5h3"/></svg></button>
        </div>
    </div>

    <script>
        const data = [
            ["Zanzare", "725.000", "Malattie (malaria, dengue, zika)"],
            ["Esseri umani", "475.000", "Violenza, guerre"],
            ["Vermi parassiti", "200.000", "Malattie intestinali"],
            ["Mosche tse-tse", "100.000", "Malattia del sonno"],
            ["Serpenti", "70.000", "Morsi velenosi"],
            ["Pidocchi", "65.000", "Tifo e altre malattie"],
            ["Scarafaggi", "40.000", "Trasmissione di batteri"],
            ["Ippopotami", "2.000", "Attacchi aggressivi"],
            ["Coccodrilli", "1.000", "Attacchi diretti"],
            ["Pulci", "500", "Trasmissione di malattie"],
            ["Api e vespe", "200", "Punture allergiche"],
            ["Elefanti", "500", "Attacchi territoriali"],
            ["Leone", "200", "Attacchi predatori"],
            ["Ragni", "10", "Morsi velenosi"],
            ["Scorpioni", "8", "Veleno neurotossico"]
        ];

        const blank = '<td class="border-r border-b border-[#e3e5e5]"></td>';
        const numOn = "font-['Open_Sans',sans-serif] font-normal text-[#3c7a58] bg-[#dfe2e1] border-r border-b border-r-[#107c41] border-b-[#cdd0cf]";
        const numOff = "font-['Open_Sans',sans-serif] font-normal text-[#444] bg-[#f0f2f2] border-r border-b border-[#d8dada]";

        // column letters
        let head = '<tr class="h-[23px] leading-[22px]"><th class="bg-[#eceeee] border-b border-[#d5d8d8] bg-[linear-gradient(135deg,transparent_60%,#cfd3d2_60%)]"></th>';
        for (const c of "ABCDEFGHIJK") {
            head += "ABCD".includes(c)
                ? `<th class="font-['Open_Sans',sans-serif] text-[16px] font-normal text-[#3c7a58] bg-[#dfe2e1] border-r border-b border-r-[#c9cccb] border-b-[#107c41]">${c}</th>`
                : `<th class="font-['Open_Sans',sans-serif] text-[16px] font-normal text-[#444] bg-[#edf0f0] border-r border-b border-[#d5d8d8]">${c}</th>`;
        }
        document.getElementById("cols").innerHTML = head + '<th class="bg-[#edf0f0] border-b border-[#d5d8d8]"></th></tr>';

        // heading row
        const title = "bg-[#c6c6c6] border-r border-b-2 border-r-[#333] border-b-[#888] font-bold text-center pt-0.5";
        let body = `<tr class="h-7"><th class="${numOn}">1</th>`;
        for (const t of ["Rank", "Organismo", "Vittime annuali", "Causa principale di morte"]) body += `<td class="${title}">${t}</td>`;
        body += blank.repeat(8) + "</tr>";

        const cell = "bg-[#c6c6c6] border-r border-b border-[#333] pt-0.5";
        data.forEach((r, i) => {
            const first = i === 0 ? "bg-white border-r border-b border-[#333] pt-0.5" : cell;
            body += `<tr class="${i % 4 === 2 ? "h-[26px]" : "h-[27px]"} leading-[22px]"><th class="${numOn}">${i + 2}</th>
                <td class="${first} text-right pr-0.5">${i + 1}</td>
                <td class="${cell} pl-0.5">${r[0]}</td>
                <td class="${cell} text-right pr-2">${r[1]}</td>
                <td class="${cell} pl-0.5">${r[2]}</td>${blank.repeat(8)}</tr>`;
        });
        for (const n of [17, 18]) body += `<tr class="h-[27px]"><th class="${numOff}">${n}</th>${blank.repeat(12)}</tr>`;
        document.getElementById("rows").innerHTML = body;
    </script>
</body>
</html>
